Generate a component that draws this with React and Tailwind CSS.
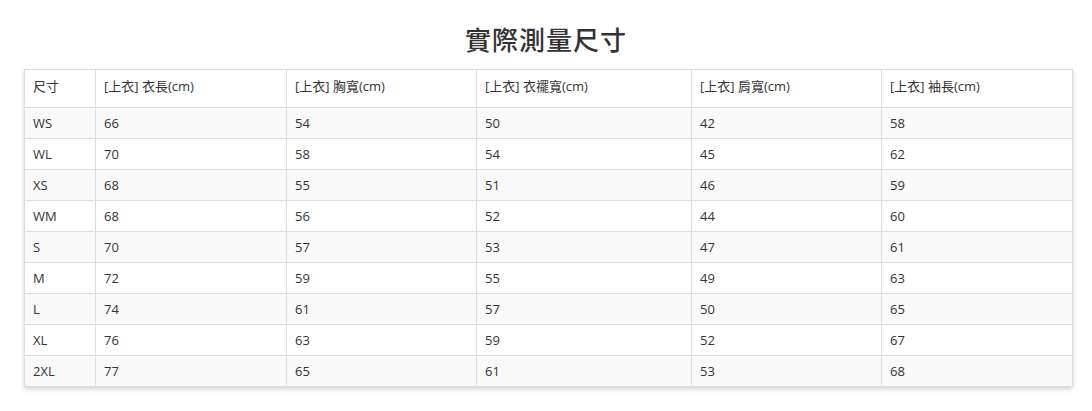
import React from 'react';

const headers = ['尺寸', '[上衣] 衣長(cm)', '[上衣] 胸寬(cm)', '[上衣] 衣襬寬(cm)', '[上衣] 肩寬(cm)', '[上衣] 袖長(cm)'];
const widths = ['w-[71px]', 'w-[191px]', 'w-[190px]', 'w-[215px]', 'w-[190px]', 'w-[191px]'];

const rows = [
  ['WS', 66, 54, 50, 42, 58],
  ['WL', 70, 58, 54, 45, 62],
  ['XS', 68, 55, 51, 46, 59],
  ['WM', 68, 56, 52, 44, 60],
  ['S', 70, 57, 53, 47, 61],
  ['M', 72, 59, 55, 49, 63],
  ['L', 74, 61, 57, 50, 65],
  ['XL', 76, 63, 59, 52, 67],
  ['2XL', 77, 65, 61, 53, 68],
];

export default function App() {
  return (
    <div className="w-[1092px] h-[411px] bg-white font-['Open_Sans','Noto_Sans_CJK_TC',sans-serif] text-[#333]">
      <h1 className="pt-[24px] h-[69px] text-center text-[26px] font-medium leading-[32px] tracking-[1px] text-[#333]">
        實際測量尺寸
      </h1>
      <div className="ml-[24px] w-[1049px] shadow-[0_2px_5px_rgba(0,0,0,0.18)]">
        <table className="w-full table-fixed border-collapse text-[13px]">
          <thead>
            <tr className="h-[38px] bg-white">
              {headers.map((h, i) => (
                <th key={i} className={`${widths[i]} border border-[#dddddd] px-[8px] pb-[3px] text-left font-normal`}>
                  {h}
                </th>
              ))}
            </tr>
          </thead>
          <tbody>
            {rows.map((r, ri) => (
              <tr key={ri} className={`h-[31px] ${ri % 2 === 0 ? 'bg-[#f9f9f9]' : 'bg-white'}`}>
                {r.map((c, ci) => (
                  <td key={ci} className="border border-[#dddddd] px-[8px] pt-[1px]">
                    {c}
                  </td>
                ))}
              </tr>
            ))}
          </tbody>
        </table>
      </div>
    </div>
  );
}
